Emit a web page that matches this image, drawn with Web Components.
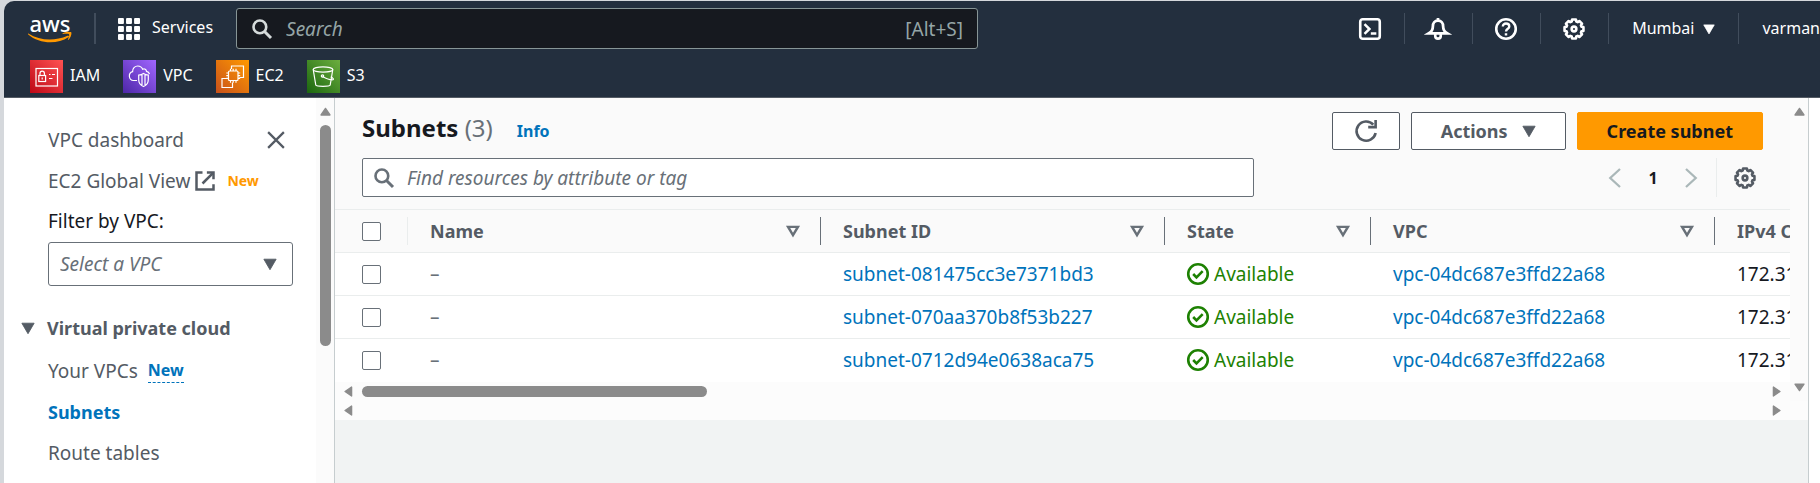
<!DOCTYPE html>
<html lang="en">
<head>
<meta charset="utf-8">
<title>Subnets | VPC Management Console</title>
<style>
  html, body { margin: 0; height: 100%; }
  body {
    font-family: "Noto Sans", "Open Sans", sans-serif;
    font-size: 18px;
    line-height: 24px;
    color: #16191f;
    background: #d5d8dc;
    --nav: #232f3e;
    --grey: #545b64;
    --mid: #687078;
    --link: #0073bb;
    --line: #eaeded;
    --edge: #c6cdcf;
  }
</style>
</head>
<body>
<console-app></console-app>

<script>
const sheet = '*,*::before,*::after{box-sizing:border-box}a{text-decoration:none;color:inherit}button,input,select{font:inherit;color:inherit;margin:0}button{cursor:pointer}';

function define(name, markup) {
  const template = document.createElement('template');
  template.innerHTML = `<style>${sheet}</style>${markup}`;
  customElements.define(name, class extends HTMLElement {
    constructor() {
      super();
      this.attachShadow({ mode: 'open' }).append(template.content.cloneNode(true));
    }
  });
}

/* Outline of a cog with eight teeth inside a 16-unit box */
function cog() {
  const pts = [];
  for (let i = 0; i < 8; i++) {
    const a = i * Math.PI / 4;
    for (const [d, r] of [[-0.3, 5.7], [-0.2, 7], [0.2, 7], [0.3, 5.7]]) {
      pts.push((8 + r * Math.sin(a + d)).toFixed(2) + ' ' + (8 - r * Math.cos(a + d)).toFixed(2));
    }
  }
  return `<path d="M${pts.join('L')}Z"/><circle cx="8" cy="8" r="1.7"/>`;
}

const icons = {
  apps: '<g fill="currentColor" stroke="none"><rect x="0" y="0" width="4.3" height="4.3" rx=".7"/><rect x="5.85" y="0" width="4.3" height="4.3" rx=".7"/><rect x="11.7" y="0" width="4.3" height="4.3" rx=".7"/><rect x="0" y="5.85" width="4.3" height="4.3" rx=".7"/><rect x="5.85" y="5.85" width="4.3" height="4.3" rx=".7"/><rect x="11.7" y="5.85" width="4.3" height="4.3" rx=".7"/><rect x="0" y="11.7" width="4.3" height="4.3" rx=".7"/><rect x="5.85" y="11.7" width="4.3" height="4.3" rx=".7"/><rect x="11.7" y="11.7" width="4.3" height="4.3" rx=".7"/></g>',
  search: '<circle cx="6.3" cy="6.3" r="5.1" stroke-width="2.1"/><path d="M10 10l5.2 5.2" stroke-width="2.4"/>',
  shell: '<rect x=".9" y=".9" width="14.2" height="14.2" rx="1.8" stroke-width="1.9"/><path d="M4 4.5L7.6 8 4 11.5M8.6 11.2h4" stroke-width="1.8"/>',
  bell: '<path d="M8 0v2M8 1.9c-2.6 0-3.7 1.900-3.700 3.900 0 3-1.300 4.400-2.900 5.300h13.200c-1.600-.9-2.900-2.300-2.900-5.300C11.700 3.800 10.600 1.900 8 1.900z" stroke-width="2"/><path d="M6 11.500v1.500a2 2 0 0 0 4 0v-1.500" stroke-width="1.900"/>',
  help: '<circle cx="8" cy="8" r="7.1" stroke-width="1.9"/><path d="M5.700 6.200c0-1.400 1-2.200 2.300-2.200s2.400.8 2.400 2.100c0 1.700-2.400 1.800-2.400 3.700" stroke-width="1.700"/><path d="M7.100 11h1.800v1.700H7.100z" fill="currentColor" stroke="none"/>',
  settings: '<g stroke-width="1.900" stroke-linejoin="round">' + cog() + '</g>',
  caret: '<path d="M1 2.500h14L8 14.500z" fill="currentColor" stroke-linejoin="round" stroke-width="1"/>',
  sort: '<path d="M2.400 3.300h11.200L8 12.600z" stroke-width="2.800"/>',
  close: '<path d="M1 1l14 14M15 1L1 15" stroke-width="2"/>',
  external: '<path d="M6 1.200H1.200v13.600h13.600V10.500M9.500 1.200h5.300V6.500" stroke-width="2"/><path d="M14.500 1.500L6 10" stroke-width="2"/>',
  refresh: '<path d="M15 9.500A7 7 0 1 1 13.300 3.300" stroke-width="1.900"/><path d="M15 0v5.200H9.600" stroke-width="1.900"/>',
  prev: '<path d="M12 .800L4.200 8l7.800 7.200" stroke-width="1.800"/>',
  next: '<path d="M4 .800L11.800 8 4 15.200" stroke-width="1.800"/>',
  ok: '<circle cx="8" cy="8" r="7.100" stroke-width="1.900"/><path d="M4.500 8l2.400 2.400 4.500-4.500" stroke-width="1.900"/>',
  up: '<path d="M8 3.500L14.500 13h-13z" fill="currentColor" stroke-linejoin="round" stroke-width="2"/>',
  down: '<path d="M8 12.500L14.500 3h-13z" fill="currentColor" stroke-linejoin="round" stroke-width="2"/>',
  left: '<path d="M3 8l9.500-6.500v13z" fill="currentColor" stroke-linejoin="round" stroke-width="2"/>',
  right: '<path d="M13 8L3.500 1.500v13z" fill="currentColor" stroke-linejoin="round" stroke-width="2"/>'
};

customElements.define('ui-icon', class extends HTMLElement {
  constructor() {
    super();
    this.attachShadow({ mode: 'open' });
  }
  connectedCallback() {
    this.shadowRoot.innerHTML = `<style>
      :host { display: block; flex: none; width: var(--size, 22px); height: var(--size, 22px); }
      svg { display: block; width: 100%; height: 100%; overflow: visible; }
    </style><svg viewBox="0 0 16 16" fill="none" stroke="currentColor" aria-hidden="true">${icons[this.getAttribute('name')]}</svg>`;
  }
});

const services = {
  iam: ['#bd0816', '#ff5252', '<rect x="6" y="8.500" width="21.500" height="17.500"/><rect x="8.800" y="15.500" width="6.800" height="6"/><path d="M10 15.500v-2.200a2.200 2.200 0 0 1 4.400 0v2.200M12.200 17.500v2M19 14.500h1.500M22 14.500h3M19 18.500h3.500"/>'],
  vpc: ['#4d27a8', '#a166ff', '<path d="M14 20.500h-3.500a4.500 4.500 0 0 1-.9-8.800c-.2-3.400 2.200-5.700 5.200-5.700 2.400 0 4 1.200 4.800 3.200 2-1 3.800.2 3.900 2.100 1.500.3 2.600 1.300 3 2.700"/><path d="M20.500 13.500c-1.500 1.100-2.800 1.500-4.800 1.500v4.500c0 4 2.200 6 4.800 7 2.600-1 4.800-3 4.800-7V15c-2 0-3.300-.4-4.800-1.500zM19 15v10M22 15v10"/>'],
  ec2: ['#c8511b', '#ff9900', '<path d="M12.500 18.500h-6.500v9h10.500v-5M15.500 9V6H27.500v11.500h-4"/><rect x="12.500" y="11" width="9.500" height="9.500" rx="1"/><path d="M14.500 8.800V11M17.200 8.800V11M20 8.800V11M14.500 20.500v2.200M17.200 20.500v2.200M20 20.500v2.200M10.300 13h2.200M10.300 15.700h2.200M10.300 18.400h2.200M22 13h2.200M22 15.700h2.200M22 18.400h2.200"/>'],
  s3: ['#1b660f', '#6cae3e', '<ellipse cx="16" cy="9.500" rx="9.800" ry="2.700"/><path d="M6.200 9.500l2.600 15.500c.8 1.700 13.600 1.700 14.400 0L25.800 9.500M15.500 16.500c4 2.200 8.500 3.700 10.500 3.200 1.200-.6-.5-2-2.300-2.800"/><circle cx="15.500" cy="16" r="1.200"/>']
};

customElements.define('service-link', class extends HTMLElement {
  constructor() {
    super();
    this.attachShadow({ mode: 'open' });
  }
  connectedCallback() {
    const [from, to, art] = services[this.getAttribute('name')];
    this.shadowRoot.innerHTML = `<style>${sheet}
      :host { display: block; }
      a { display: flex; align-items: center; gap: 7px; }
      span { padding-bottom: 3px; }
      svg { display: block; width: 33px; height: 33px; }
    </style><a href="#"><svg viewBox="0 0 33 33" aria-hidden="true">
      <defs><linearGradient id="g" x1="0" y1="1" x2="1" y2="0"><stop stop-color="${from}"/><stop offset="1" stop-color="${to}"/></linearGradient></defs>
      <rect width="33" height="33" fill="url(#g)"/><g fill="none" stroke="#fff" stroke-width="1.200">${art}</g></svg><span><slot></slot></span></a>`;
  }
});

define('aws-logo', `<style>
  :host { display: block; color: #fff; width: 44px; }
  a { display: block; text-align: center; font-size: 22px; line-height: 18px; font-weight: 500; }
  svg { display: block; width: 44px; height: 12px; }
</style><a href="#">aws<svg viewBox="0 0 44 12" aria-hidden="true"><path d="M.3 1.500C12 9 27 9.300 39.500 3.800c1.600-.6 2 .5.800 1.400C29.500 12.500 11 12 .2 2.400c-.4-.5-.3-1.100.1-.9z" fill="#f90"/><path d="M34.500 1.400c3-1.900 8-2 8.700-1.200s-.2 5.500-2.700 7.600c-.5.400-.8.200-.6-.3.800-2 1.600-4.400 1.200-5.100s-4-.6-6-.4c-.7 0-1-.3-.6-.6z" fill="#f90"/></svg></a>`);

define('console-header', `<style>
  :host { display: block; margin: 1px 0 0 4px; background: var(--nav); color: #fff; border-top-left-radius: 10px;
    border-bottom: 1px solid var(--grey); font-size: 16px; line-height: 22px; padding: 7px 0 4px 24px; overflow: hidden; }
  .top, .tools, .tools > *, .services, .favourites, .search { display: flex; align-items: center; }
  .top { height: 41px; }
  .bar { width: 2px; height: 31px; background: #414d5c; margin: 0 22px; flex: none; }
  button { background: none; border: 0; padding: 0; }
  .services { gap: 12px; margin-right: 23px; }
  .services span { padding-bottom: 3px; }
  .search { flex: 0 1 742px; height: 41px; padding: 0 14px 0 15px; gap: 14px; background: #16191f; border: 1px solid #879596; border-radius: 3px;
    color: #95a5a6; font-size: 19px; --size: 20px; }
  .search ui-icon { color: #d5dbdb; }
  input { flex: 1; min-width: 0; background: none; border: 0; outline: 0; padding: 0; }
  input::placeholder { color: #95a5a6; font-style: italic; opacity: 1; }
  .tools { margin-left: auto; }
  .tools > * { height: 31px; padding: 0 23px 0 22px; gap: 9px; border-left: 1px solid #414d5c; white-space: nowrap; }
  .tools > :first-child { border-left: 0; }
  .tools > .text { padding-left: 23px; }
  .tools > :last-child { padding-right: 0; }
  .region ui-icon { --size: 12px; }
  .tools span { padding-bottom: 2px; }
  .favourites { gap: 23px; margin: 11px 0 0 2px; }
</style>
<header>
  <div class="top">
    <aws-logo></aws-logo><div class="bar"></div>
    <button class="services"><ui-icon name="apps"></ui-icon><span>Services</span></button>
    <label class="search"><ui-icon name="search"></ui-icon><input type="text" placeholder="Search" aria-label="Search"><span>[Alt+S]</span></label>
    <div class="tools">
      <button aria-label="CloudShell"><ui-icon name="shell"></ui-icon></button>
      <button aria-label="Notifications"><ui-icon name="bell"></ui-icon></button>
      <button aria-label="Help"><ui-icon name="help"></ui-icon></button>
      <button aria-label="Settings"><ui-icon name="settings"></ui-icon></button>
      <button class="text region"><span>Mumbai</span><ui-icon name="caret"></ui-icon></button>
      <button class="text"><span>varman</span></button>
    </div>
  </div>
  <nav class="favourites">
    <service-link name="iam">IAM</service-link>
    <service-link name="vpc">VPC</service-link>
    <service-link name="ec2">EC2</service-link>
    <service-link name="s3">S3</service-link>
  </nav>
</header>`);

define('side-nav', `<style>
  :host { display: flex; flex: none; width: 331px; background: #fff; border-right: 1px solid var(--edge); color: var(--grey); font-size: 19px; }
  nav { flex: 1; padding: 21px 23px 0 44px; }
  .row { display: flex; align-items: center; height: 41px; gap: 5px; }
  .row button { margin-left: auto; margin-right: 8px; border: 0; background: none; padding: 0; --size: 18px; }
  .ext { --size: 20px; }
  .new { font-size: 14px; font-weight: 700; color: #f90; margin-left: 7px; }
  label { display: block; color: #16191f; line-height: 41px; }
  .select { display: grid; align-items: center; }
  select { grid-area: 1/1; width: 100%; height: 44px; appearance: none; background: #fff; border: 1px solid var(--mid); border-radius: 3px; padding: 0 11px; font-style: italic; color: var(--mid); }
  .select ui-icon { grid-area: 1/1; justify-self: end; margin-right: 16px; --size: 14px; pointer-events: none; }
  details { margin-top: 21px; }
  summary { display: flex; align-items: center; gap: 12px; height: 41px; margin: 0 0 2px -27px; font-size: 18px; font-weight: 700; --size: 14px; list-style: none; }
  .beta { font-size: 16px; line-height: 24px; font-weight: 700; color: var(--link); border-bottom: 1px dashed var(--link); margin-left: 5px; }
  .current { font-size: 18px; font-weight: 700; color: var(--link); }
</style>
<nav aria-label="VPC">
  <div class="row"><a href="#">VPC dashboard</a><button aria-label="Close navigation"><ui-icon name="close"></ui-icon></button></div>
  <div class="row"><a href="#">EC2 Global View</a><ui-icon class="ext" name="external"></ui-icon><span class="new">New</span></div>
  <label for="vpc">Filter by VPC:</label>
  <div class="select"><select id="vpc"><option>Select a VPC</option></select><ui-icon name="caret"></ui-icon></div>
  <details open>
    <summary><ui-icon name="caret"></ui-icon>Virtual private cloud</summary>
    <div class="row"><a href="#">Your VPCs</a><a class="beta" href="#">New</a></div>
    <div class="row"><a class="current" href="#">Subnets</a></div>
    <div class="row"><a href="#">Route tables</a></div>
  </details>
</nav>
<scroll-rail class="side"></scroll-rail>`);

define('scroll-rail', `<style>
  :host { display: flex; flex-direction: column; align-items: center; flex: none; width: 18px; padding: 8px 0; background: #fbfbfb; color: #8b8b8b; --size: 11px; }
  i { display: none; width: 11px; height: 221px; border-radius: 6px; background: currentColor; margin-top: 8px; }
  :host(.side) i { display: block; }
  .end { margin-top: auto; }
  :host(.side) .end { display: none; }
</style><ui-icon name="up"></ui-icon><i></i><ui-icon class="end" name="down"></ui-icon>`);

define('scroll-strip', `<style>
  :host { display: flex; align-items: center; height: 19px; padding: 0 8px; background: #fcfcfc; color: #8b8b8b; --size: 11px; }
  i { display: none; width: 24%; height: 11px; border-radius: 6px; background: currentColor; margin-left: 8px; }
  :host(.filled) i { display: block; }
  .end { margin-left: auto; }
</style><ui-icon name="left"></ui-icon><i></i><ui-icon class="end" name="right"></ui-icon>`);

define('list-toolbar', `<style>
  :host { display: grid; gap: 8px; padding: 14px 27px 12px; }
  .head, .actions, .pages, .find, button { display: flex; align-items: center; }
  .head { justify-content: space-between; align-items: flex-start; height: 38px; }
  .title { display: flex; align-items: baseline; }
  h1 { margin: 0; font-size: 24px; line-height: 32px; }
  h1 span { font-weight: 400; color: var(--mid); }
  .info { margin-left: 24px; font-size: 16px; font-weight: 700; color: var(--link); }
  .actions { gap: 11px; }
  button { justify-content: center; border: 0; background: none; padding: 0; color: var(--grey); }
  .actions button { height: 38px; background: #fff; border: 1px solid var(--grey); border-radius: 2px; font-weight: 700; padding: 0 29px; gap: 14px; }
  .actions .icon { width: 68px; padding: 0; }
  .menu ui-icon { --size: 14px; }
  .actions .main { background: #f90; border-color: #f90; color: #16191f; }
  .tools { display: grid; grid-template-columns: 7fr 4fr; }
  .find { height: 39px; border: 1px solid var(--mid); border-radius: 2px; background: #fff; color: var(--mid); padding: 0 11px; gap: 13px; font-size: 19px; --size: 20px; }
  input { flex: 1; min-width: 0; border: 0; outline: 0; background: none; padding: 0; }
  input::placeholder { color: var(--mid); font-style: italic; opacity: 1; }
  .pages { justify-content: flex-end; padding-right: 7px; }
  .arrow { color: #aab7b8; --size: 20px; }
  .page { width: 56px; font-size: 16px; font-weight: 700; color: #16191f; }
  .gear { height: 39px; border-left: 1px solid var(--line); padding-left: 17px; margin-left: 15px; }
</style>
<div class="head">
  <div class="title"><h1>Subnets <span>(3)</span></h1><a class="info" href="#">Info</a></div>
  <div class="actions">
    <button class="icon" aria-label="Refresh"><ui-icon name="refresh"></ui-icon></button>
    <button class="menu">Actions<ui-icon name="caret"></ui-icon></button>
    <button class="main">Create subnet</button>
  </div>
</div>
<div class="tools">
  <label class="find"><ui-icon name="search"></ui-icon><input type="text" placeholder="Find resources by attribute or tag" aria-label="Find resources by attribute or tag"></label>
  <div class="pages">
    <button class="arrow" aria-label="Previous page"><ui-icon name="prev"></ui-icon></button>
    <button class="page">1</button>
    <button class="arrow" aria-label="Next page"><ui-icon name="next"></ui-icon></button>
    <button class="gear" aria-label="Preferences"><ui-icon name="settings"></ui-icon></button>
  </div>
</div>`);

const rows = ['subnet-081475cc3e7371bd3', 'subnet-070aa370b8f53b227', 'subnet-0712d94e0638aca75'].map(id => `
  <tr><td><input type="checkbox" aria-label="Select ${id}"></td><td class="dash">–</td><td><a href="#">${id}</a></td>
  <td><span class="ok"><ui-icon name="ok"></ui-icon>Available</span></td><td><a href="#">vpc-04dc687e3ffd22a68</a></td><td>172.31</td></tr>`).join('');
const heads = ['Name', 'Subnet ID', 'State', 'VPC', 'IPv4 CIDR'].map(text =>
  `<th scope="col"><div>${text}<ui-icon name="sort"></ui-icon></div></th>`).join('');

define('subnet-table', `<style>
  :host { display: block; overflow: hidden; background: #fff; }
  table { width: 1579px; table-layout: fixed; border-collapse: separate; border-spacing: 0; }
  th, td { height: 43px; padding: 0 0 0 22px; text-align: left; white-space: nowrap; border-bottom: 1px solid var(--line); }
  td { font-size: 19px; }
  th { height: 44px; background: #fafafa; border-top: 1px solid var(--line); color: var(--grey); }
  tbody tr:last-child td { border-bottom-color: #fff; }
  th:first-child, td:first-child { padding-left: 27px; }
  th div { display: flex; align-items: center; justify-content: space-between; height: 28px; padding-right: 20px; border-right: 1px solid var(--mid); --size: 14px; }
  th:first-child div { border-right-color: var(--line); }
  th ui-icon { color: var(--mid); }
  input { display: block; appearance: none; width: 19px; height: 19px; border: 1px solid var(--mid); border-radius: 2px; background: #fff; }
  a { color: var(--link); }
  .dash { color: var(--mid); }
  .ok { display: flex; align-items: center; gap: 5px; color: #1d8102; }
</style>
<table>
  <colgroup><col style="width:73px"><col style="width:413px"><col style="width:344px"><col style="width:206px"><col style="width:344px"><col></colgroup>
  <thead><tr><th><div><input type="checkbox" aria-label="Select all"></div></th>${heads}</tr></thead>
  <tbody>${rows}</tbody>
</table>`);

define('subnet-list', `<style>
  :host { display: block; flex: 1; min-width: 0; background: #f1f3f3; border-right: 1px solid var(--edge); }
  .panel { display: flex; background: #fafafa; }
  .content { flex: 1; min-width: 0; }
  .last { padding-right: 18px; background: #fcfcfc; }
</style>
<div class="panel">
  <div class="content">
    <list-toolbar></list-toolbar>
    <subnet-table></subnet-table>
    <scroll-strip class="filled"></scroll-strip>
  </div>
  <scroll-rail></scroll-rail>
</div>
<div class="last"><scroll-strip></scroll-strip></div>`);

define('console-app', `<style>
  :host { display: flex; flex-direction: column; min-height: 100vh; }
  main { display: flex; flex: 1; margin-left: 4px; padding-right: 11px; background: #fff; }
</style>
<console-header></console-header>
<main><side-nav></side-nav><subnet-list></subnet-list></main>`);
</script>
</body>
</html>
